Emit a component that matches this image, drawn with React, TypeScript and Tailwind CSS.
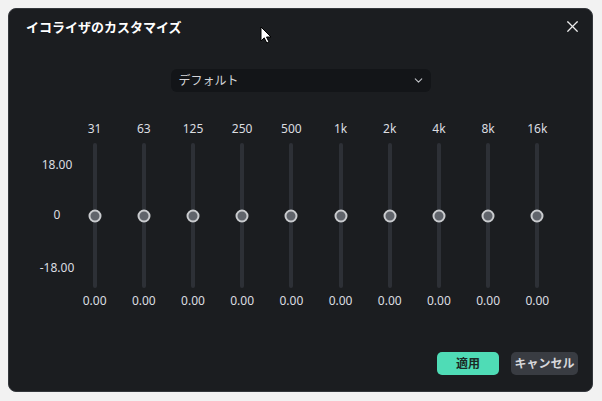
import { X, ChevronDown } from "lucide-react";

const bands = ["31", "63", "125", "250", "500", "1k", "2k", "4k", "8k", "16k"];

const font = { fontFamily: '"Noto Sans", "Noto Sans CJK JP", sans-serif' };

function Band({ label }: { label: string }) {
  return (
    <div className="flex w-[49.2px] flex-col items-center">
      <div className="flex h-4 items-center text-[12px] text-[#dcdde0]">{label}</div>
      <div className="relative mt-[6px] h-[145px] w-[4px] rounded-full bg-[#2d3036]">
        <div className="absolute left-1/2 top-1/2 h-[13px] w-[13px] -translate-x-1/2 -translate-y-1/2 rounded-full border-2 border-[#c9cbce] bg-[#60646b]" />
      </div>
      <div className="mt-[5px] flex h-4 items-center text-[12px] text-[#dcdde0]">0.00</div>
    </div>
  );
}

export default function App() {
  return (
    <div className="h-[401px] w-[602px] bg-[#f2f2f2] pl-[8px] pt-[8px]" style={font}>
      <div className="relative flex h-[384px] w-[585px] flex-col rounded-[8px] border border-[#34373c] bg-[#1b1d20]">
        <div className="flex items-center justify-between pl-[17px] pr-[10px] pt-[8px]">
          <span className="text-[13px] font-bold leading-[18px] text-white">イコライザのカスタマイズ</span>
          <X className="h-[19px] w-[19px] text-[#ececec]" strokeWidth={1.5} />
        </div>

        <div className="mx-auto mt-[33px] flex h-[23px] w-[260px] items-center justify-between rounded-[6px] bg-[#131518] pl-[8px] pr-[6px]">
          <span className="text-[12px] text-[#d4d5d8]">デフォルト</span>
          <ChevronDown className="h-[13px] w-[13px] text-[#c0c2c6]" strokeWidth={2} />
        </div>

        <div className="mt-[29px] flex pl-[35px]">
          <div className="flex w-[26px] flex-col items-center pt-[36px] text-[12px] text-[#dcdde0]">
            <div className="flex h-4 items-center">18.00</div>
            <div className="mt-[34px] flex h-4 items-center">0</div>
            <div className="mt-[37px] flex h-4 items-center">-18.00</div>
          </div>
          {bands.map((b) => (
            <Band key={b} label={b} />
          ))}
        </div>

        <div className="mt-[43px] flex justify-end gap-[12px] pr-[14px]">
          <button className="flex h-[23px] w-[62px] items-center justify-center rounded-[5px] bg-[#4fdcb6] text-[12px] font-bold text-[#1b2a26]">
            適用
          </button>
          <button className="flex h-[23px] w-[67px] items-center justify-center rounded-[5px] bg-[#393c42] text-[12px] font-bold text-[#d6d7da]">
            キャンセル
          </button>
        </div>

        <svg className="absolute left-[251px] top-[17px]" width="13" height="18" viewBox="0 0 13 18">
          <path d="M1 1 L1 15 L4.2 11.8 L6.8 17 L9 16 L6.5 11 L11 11 Z" fill="#fff" stroke="#000" strokeWidth="1" strokeLinejoin="round" />
        </svg>
      </div>
    </div>
  );
}
